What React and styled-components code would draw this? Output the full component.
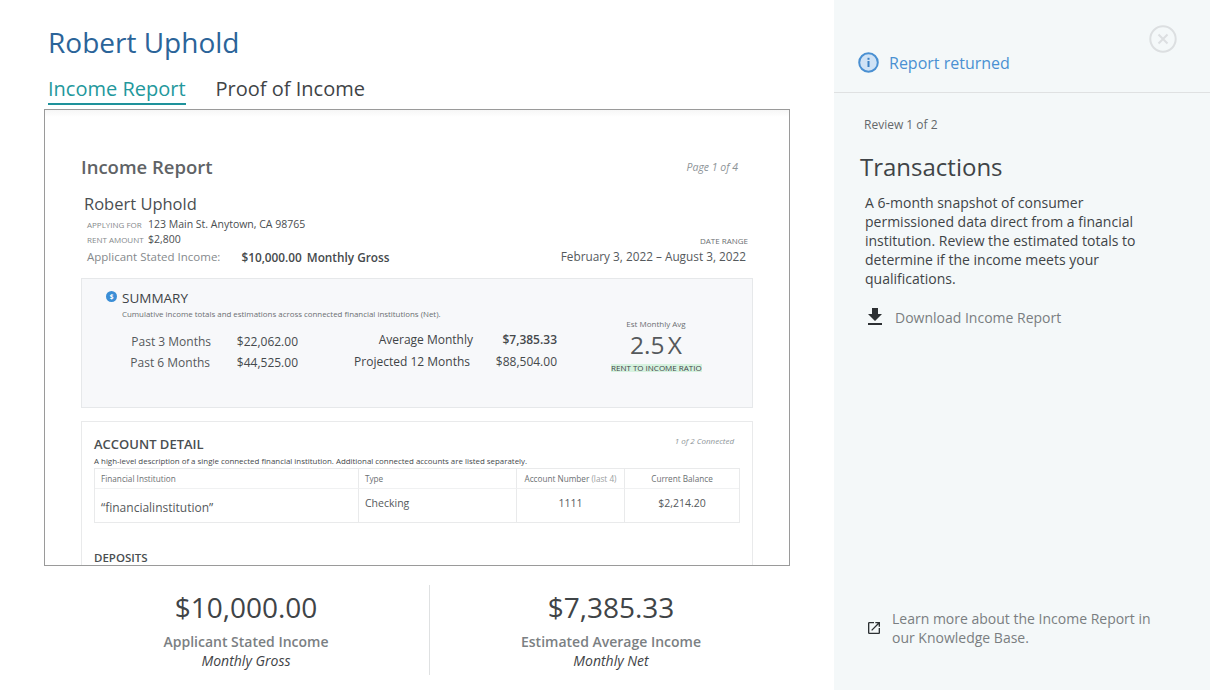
import React from "react";
import styled, { createGlobalStyle } from "styled-components";
import { MdFileDownload, MdOpenInNew } from "react-icons/md";

const GlobalStyle = createGlobalStyle`
  html, body {
    margin: 0;
    padding: 0;
    background: #fff;
    font-family: "Open Sans", "Noto Sans", sans-serif;
    color: #3f4447;
  }
  * { box-sizing: border-box; }
`;

const Page = styled.div`
  display: flex;
  width: 1210px;
  height: 690px;
  overflow: hidden;
`;
const Main = styled.main`
  width: 834px;
  flex-shrink: 0;
  padding: 23px 0 0 44px;
`;
const Name = styled.h1`
  margin: 0 0 0 4px;
  font-size: 28px;
  line-height: 38px;
  font-weight: 400;
  color: #2b6499;
`;
const Tabs = styled.div`
  display: flex;
  gap: 30px;
  margin: 12px 0 0 4px;
  height: 36px;
`;
const Tab = styled.div`
  font-size: 20px;
  line-height: 32px;
  height: 32px;
  color: ${(p) => (p.$active ? "#23989c" : "#3f4447")};
  border-bottom: ${(p) => (p.$active ? "2px solid #1f929b" : "none")};
`;
const Frame = styled.div`
  width: 746px;
  height: 457px;
  overflow: hidden;
  border: 1px solid #9a9a9a;
  padding: 0 36px;
  background: linear-gradient(#f6f6f6, #fff 7px);
`;
const ReportHead = styled.div`
  display: flex;
  justify-content: space-between;
  padding-top: 44px;
`;
const ReportTitle = styled.h2`
  margin: 0;
  font-size: 18.5px;
  line-height: 26px;
  font-weight: 600;
  color: #5f6366;
`;
const PageNote = styled.span`
  font-size: 10.5px;
  line-height: 26px;
  font-style: italic;
  color: #8d9498;
  margin-right: 15px;
`;
const Applicant = styled.div`
  margin: 11px 0 0 3px;
  font-size: 16.5px;
  line-height: 26px;
  color: #4a4e51;
`;
const Meta = styled.div`
  display: flex;
  align-items: baseline;
  margin-left: 6px;
  height: 15px;
  font-size: 10.5px;
  line-height: 15px;
  color: #4a4e51;
`;
const MetaLabel = styled.span`
  width: 61px;
  font-size: 8px;
  color: #85898c;
`;
const IncomeRow = styled.div`
  display: flex;
  align-items: flex-end;
  justify-content: space-between;
  margin: 1px 7px 0 6px;
`;
const Stated = styled.div`
  display: flex;
  font-size: 11.5px;
  line-height: 18px;
  color: #85898c;
`;
const StatedValue = styled.b`
  font-size: 11.8px;
  font-weight: 600;
  color: #45494c;
  margin-left: ${(p) => p.$gap}px;
`;
const DateBox = styled.div`
  text-align: right;
  margin: -13px 0 1px;
`;
const DateLabel = styled.div`
  font-size: 8px;
  line-height: 11px;
  color: #6b6f72;
  margin-right: -2px;
`;
const DateValue = styled.div`
  margin-top: 1px;
  font-size: 11.8px;
  line-height: 18px;
  color: #55595c;
`;
const SummaryCard = styled.section`
  height: 130px;
  margin-top: 12px;
  padding: 10px 0 0 24px;
  background: #f7f8fa;
  border: 1px solid #e6e8ea;
`;
const SummaryHead = styled.div`
  display: flex;
  align-items: center;
  gap: 5px;
  height: 18px;
  font-size: 13.5px;
  color: #3f4447;
`;
const SummaryIcon = styled.svg`
  margin-top: -4px;
`;
const SummaryNote = styled.div`
  margin: 1px 0 0 16px;
  font-size: 7.9px;
  line-height: 13px;
  color: #6b6f72;
`;
const SummaryBody = styled.div`
  display: flex;
  margin-top: 10px;
`;
const Figures = styled.div`
  display: grid;
  grid-template-columns: ${(p) => p.$cols};
  grid-auto-rows: ${(p) => p.$row}px;
  align-items: center;
  font-size: 12px;
  margin-top: ${(p) => p.$top}px;
  color: #55595c;
`;
const FigLabel = styled.span`
  text-align: right;
  padding-right: ${(p) => p.$inset || 0}px;
  color: ${(p) => (p.$dark ? "#3f4447" : "#55595c")};
`;
const FigValue = styled.span`
  text-align: right;
  font-weight: ${(p) => (p.$bold ? 600 : 500)};
  color: #45494c;
`;
const Ratio = styled.div`
  width: 90px;
  margin: -13px 0 0 54px;
  text-align: center;
  flex-shrink: 0;
`;
const RatioLabel = styled.div`
  font-size: 8px;
  line-height: 12px;
  color: #6b6f72;
`;
const RatioValue = styled.div`
  font-size: 24.5px;
  line-height: 30px;
  color: #55595c;
  word-spacing: -3px;
`;
const RatioNote = styled.div`
  width: fit-content;
  margin: 4px auto 0;
  font-size: 8px;
  line-height: 8px;
  color: #3f4447;
  white-space: nowrap;
  background: #d6f2df;
`;
const AccountCard = styled.section`
  margin-top: 13px;
  height: 200px;
  padding: 12px 12px 0;
  border: 1px solid #e9eaeb;
`;
const AccountHead = styled.div`
  display: flex;
  justify-content: space-between;
  height: 21px;
  font-size: 13px;
  line-height: 20px;
  font-weight: 600;
  color: #4a4e51;
`;
const ConnectedNote = styled.span`
  font-size: 8px;
  font-style: italic;
  font-weight: 400;
  line-height: 15px;
  color: #8d9498;
  margin: -1px 6px 0 0;
`;
const AccountNote = styled.div`
  font-size: 7.9px;
  line-height: 12px;
  color: #45494c;
`;
const Table = styled.div`
  display: grid;
  grid-template-columns: 263px 158px 108px 115px;
  grid-template-rows: 20px 33px;
  margin-top: 1px;
  border: 1px solid #e9eaeb;
  width: 646px;
`;
const HeadCell = styled.div`
  padding: 0 6px;
  font-size: 8.2px;
  line-height: 19px;
  color: #6b6f72;
  text-align: ${(p) => (p.$center ? "center" : "left")};
  border-bottom: 1px solid #f0f1f2;
  border-left: ${(p) => (p.$first ? "none" : "1px solid #e9eaeb")};
`;
const Muted = styled.span`
  color: #9a9ea1;
`;
const BodyCell = styled.div`
  padding: ${(p) => (p.$first ? "10px 6px 0" : "5px 6px 0")};
  font-size: ${(p) => (p.$first ? 12 : 10.5)}px;
  line-height: 18px;
  color: #55595c;
  text-align: ${(p) => (p.$center ? "center" : "left")};
  border-left: ${(p) => (p.$first ? "none" : "1px solid #e9eaeb")};
`;
const Deposits = styled.div`
  margin-top: 27px;
  font-size: 11.5px;
  line-height: 16px;
  font-weight: 600;
  color: #4a4e51;
`;
const Totals = styled.div`
  display: flex;
  width: 746px;
  height: 90px;
  margin-top: 19px;
`;
const Total = styled.div`
  text-align: center;
  width: ${(p) => p.$width}px;
  padding: ${(p) => p.$pad};
  border-left: ${(p) => (p.$line ? "1px solid #dfe1e2" : "none")};
`;
const TotalValue = styled.div`
  font-size: 28px;
  line-height: 38px;
  padding-top: 3px;
  color: #3f4447;
`;
const TotalLabel = styled.div`
  margin-top: 6px;
  font-size: 14px;
  line-height: 19px;
  font-weight: 600;
  color: #7b8083;
`;
const TotalSub = styled.div`
  font-size: 14px;
  line-height: 19px;
  font-style: italic;
  color: #3f4447;
`;
const Side = styled.aside`
  display: flex;
  flex-direction: column;
  flex: 1;
  background: #f4f8f9;
`;
const SideHead = styled.div`
  position: relative;
  display: flex;
  align-items: center;
  gap: 10px;
  height: 93px;
  padding: 33px 0 0 24px;
  border-bottom: 1px solid #dfe1e2;
  font-size: 16px;
  color: #4a90d2;
`;
const Close = styled.svg`
  position: absolute;
  top: 25px;
  right: 33px;
`;
const SideBody = styled.div`
  display: flex;
  flex-direction: column;
  flex: 1;
  padding: 23px 30px 43px 26px;
`;
const Review = styled.div`
  margin-left: 4px;
  font-size: 12px;
  line-height: 18px;
  color: #64686b;
`;
const SideTitle = styled.h2`
  margin: 16px 0 0;
  font-size: 24px;
  line-height: 34px;
  font-weight: 400;
  color: #3f4447;
`;
const Para = styled.p`
  margin: 9px 0 0 5px;
  max-width: 280px;
  font-size: 14px;
  line-height: 19px;
  color: #3f4447;
`;
const SideLink = styled.div`
  display: flex;
  align-items: center;
  font-size: 14px;
  line-height: 19px;
  color: #7a7e81;
  margin: ${(p) => p.$margin};
  gap: ${(p) => p.$gap}px;
  svg { flex-shrink: 0; color: #2c3033; }
`;
const LinkText = styled.span`
  max-width: 270px;
`;

export default function App() {
  return (
    <Page>
      <GlobalStyle />
      <Main>
        <Name>Robert Uphold</Name>
        <Tabs>
          <Tab $active>Income Report</Tab>
          <Tab>Proof of Income</Tab>
        </Tabs>
        <Frame>
          <ReportHead>
            <ReportTitle>Income Report</ReportTitle>
            <PageNote>Page 1 of 4</PageNote>
          </ReportHead>
          <Applicant>Robert Uphold</Applicant>
          <Meta>
            <MetaLabel>APPLYING FOR</MetaLabel>123 Main St. Anytown, CA 98765
          </Meta>
          <Meta>
            <MetaLabel>RENT AMOUNT</MetaLabel>$2,800
          </Meta>
          <IncomeRow>
            <Stated>
              Applicant Stated Income:
              <StatedValue $gap={21}>$10,000.00</StatedValue>
              <StatedValue $gap={5}>Monthly Gross</StatedValue>
            </Stated>
            <DateBox>
              <DateLabel>DATE RANGE</DateLabel>
              <DateValue>February 3, 2022 – August 3, 2022</DateValue>
            </DateBox>
          </IncomeRow>
          <SummaryCard>
            <SummaryHead>
              <SummaryIcon width="11" height="11" viewBox="0 0 11 11">
                <circle cx="5.5" cy="5.5" r="5.5" fill="#3b8ed6" />
                <text x="5.5" y="7.8" fontSize="6.5" fontWeight="700" textAnchor="middle" fill="#fff">$</text>
              </SummaryIcon>
              SUMMARY
            </SummaryHead>
            <SummaryNote>Cumulative income totals and estimations across connected financial institutions (Net).</SummaryNote>
            <SummaryBody>
              <Figures $cols="105px 87px" $row={21} $top={0}>
                <FigLabel>Past 3 Months</FigLabel>
                <FigValue>$22,062.00</FigValue>
                <FigLabel $inset={1}>Past 6 Months</FigLabel>
                <FigValue>$44,525.00</FigValue>
              </Figures>
              <Figures $cols="175px 84px" $row={22} $top={-3}>
                <FigLabel $dark>Average Monthly</FigLabel>
                <FigValue $bold>$7,385.33</FigValue>
                <FigLabel $dark $inset={3}>Projected 12 Months</FigLabel>
                <FigValue>$88,504.00</FigValue>
              </Figures>
              <Ratio>
                <RatioLabel>Est Monthly Avg</RatioLabel>
                <RatioValue>2.5 X</RatioValue>
                <RatioNote>RENT TO INCOME RATIO</RatioNote>
              </Ratio>
            </SummaryBody>
          </SummaryCard>
          <AccountCard>
            <AccountHead>
              ACCOUNT DETAIL
              <ConnectedNote>1 of 2 Connected</ConnectedNote>
            </AccountHead>
            <AccountNote>A high-level description of a single connected financial institution. Additional connected accounts are listed separately.</AccountNote>
            <Table>
              <HeadCell $first>Financial Institution</HeadCell>
              <HeadCell>Type</HeadCell>
              <HeadCell $center>Account Number <Muted>(last 4)</Muted></HeadCell>
              <HeadCell $center>Current Balance</HeadCell>
              <BodyCell $first>“financialinstitution”</BodyCell>
              <BodyCell>Checking</BodyCell>
              <BodyCell $center>1111</BodyCell>
              <BodyCell $center>$2,214.20</BodyCell>
            </Table>
            <Deposits>DEPOSITS</Deposits>
          </AccountCard>
        </Frame>
        <Totals>
          <Total $width={385} $pad="0 0 0 19px">
            <TotalValue>$10,000.00</TotalValue>
            <TotalLabel>Applicant Stated Income</TotalLabel>
            <TotalSub>Monthly Gross</TotalSub>
          </Total>
          <Total $line $width={361} $pad="0 0 0 2px">
            <TotalValue>$7,385.33</TotalValue>
            <TotalLabel>Estimated Average Income</TotalLabel>
            <TotalSub>Monthly Net</TotalSub>
          </Total>
        </Totals>
      </Main>
      <Side>
        <SideHead>
          <svg width="21" height="21" viewBox="0 0 21 21">
            <circle cx="10.5" cy="10.5" r="9.3" fill="#cfe2f5" stroke="#4a90d2" strokeWidth="2" />
            <rect x="9.5" y="9" width="2" height="6" fill="#3b80c4" />
            <rect x="9.5" y="5.8" width="2" height="2" fill="#3b80c4" />
          </svg>
          Report returned
          <Close width="28" height="28" viewBox="0 0 28 28" fill="none" stroke="#dcdfe1">
            <circle cx="14" cy="14" r="12.7" strokeWidth="2" />
            <path d="M9.5 9.5l9 9M18.5 9.5l-9 9" strokeWidth="2" />
          </Close>
        </SideHead>
        <SideBody>
          <Review>Review 1 of 2</Review>
          <SideTitle>Transactions</SideTitle>
          <Para>
            A 6-month snapshot of consumer permissioned data direct from a financial institution. Review the estimated totals to determine if the income meets your qualifications.
          </Para>
          <SideLink $margin="17px 0 0 3px" $gap={8}>
            <MdFileDownload size={24} />
            Download Income Report
          </SideLink>
          <SideLink $margin="auto 0 0 6px" $gap={10}>
            <MdOpenInNew size={16} />
            <LinkText>Learn more about the Income Report in our Knowledge Base.</LinkText>
          </SideLink>
        </SideBody>
      </Side>
    </Page>
  );
}
